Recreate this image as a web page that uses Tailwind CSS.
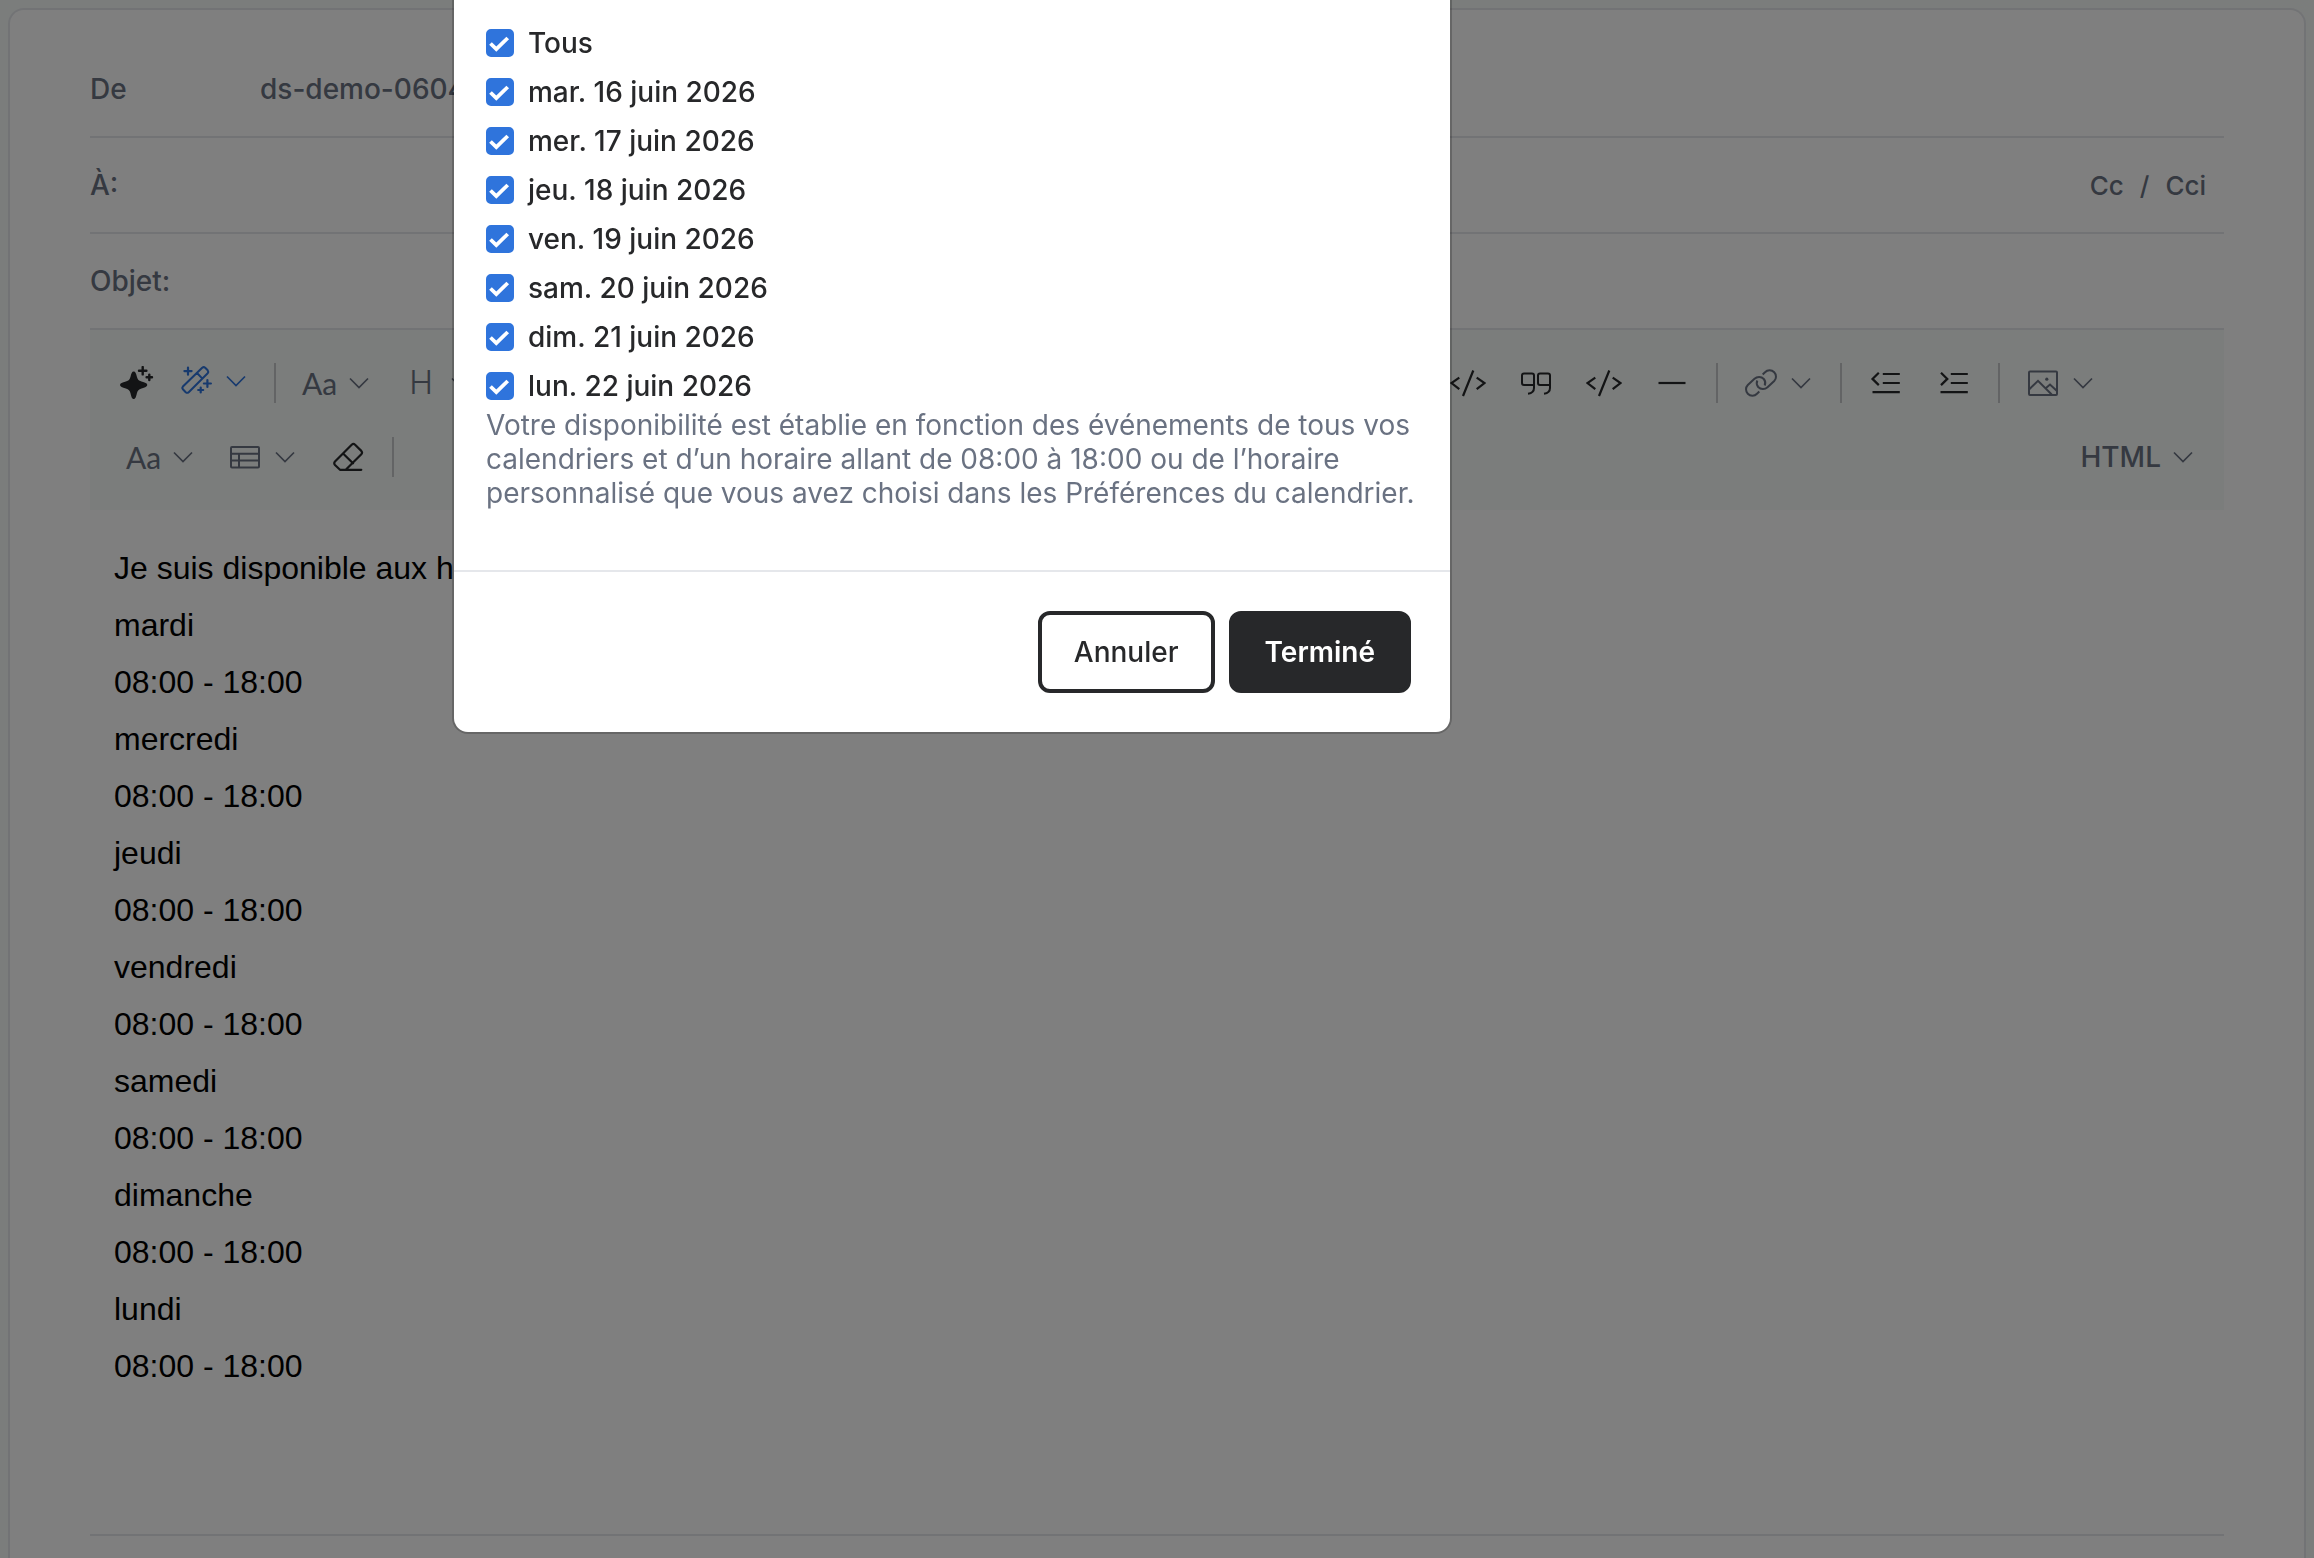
<!DOCTYPE html>
<html lang="fr">
<head>
    <meta charset="UTF-8">
    <meta name="viewport" content="width=device-width, initial-scale=1.0">
    <title>Nouveau message</title>
    <script src="https://cdn.jsdelivr.net/npm/@tailwindcss/browser@4"></script>
</head>
<body class="bg-[#f6faf8] font-['Inter',sans-serif] text-[28px] font-medium text-gray-500 overflow-hidden">

    <!-- Shared icons -->
    <svg class="hidden">
        <symbol id="chevron" viewBox="0 0 20 12"><path d="M1 1.500 10 10.500 19 1.500" fill="none" stroke="currentColor" stroke-width="1.700"/></symbol>
        <symbol id="code" viewBox="0 0 36 36"><path d="M23.300 5.500 13 31M9.300 12.700 1.500 18l7.800 6.200M26.700 12.700 34.500 18l-7.800 6.200" fill="none" stroke="currentColor" stroke-width="2.200"/></symbol>
        <symbol id="check" viewBox="0 0 28 28"><path d="m4.500 14.500 5.800 5.700L21.700 9" fill="none" stroke="currentColor" stroke-width="3.800"/></symbol>
    </svg>

    <main class="min-h-screen flex flex-col px-2 pt-2">
        <section class="flex-1 bg-white border-2 border-b-0 border-gray-200 rounded-t-[16px] px-20 pt-8">
            <!-- Message headers -->
            <div class="flex items-center h-24 border-b-2 border-gray-200">
                <span class="w-[170px]">De</span>
                <span>ds-demo-0604</span>
            </div>
            <div class="flex items-center h-24 border-b-2 border-gray-200">
                <label for="to" class="w-[170px]">À:</label>
                <input type="text" id="to" class="flex-1 outline-none">
                <div class="flex items-center gap-4 pr-[18px] text-[26px]">
                    <button type="button">Cc</button>
                    <span>/</span>
                    <button type="button">Cci</button>
                </div>
            </div>
            <div class="flex items-center h-24 border-b-2 border-gray-200">
                <label for="subject" class="w-[170px]">Objet:</label>
                <input type="text" id="subject" class="flex-1 outline-none">
            </div>

            <!-- Formatting toolbar -->
            <div class="bg-[#f6faf8] py-4 pl-5 pr-3">
                <div class="flex items-center justify-between h-[74px]">
                    <div class="flex items-center">
                        <button type="button" aria-label="Assistant" class="w-[60px] flex justify-center text-[#27282a] pr-[6px]">
                            <svg class="size-[34px]" viewBox="0 0 34 34"><path d="M13.700 5.500c1.800 0 2.400 2 3.200 5.300.7 2.800 1.800 4 4.600 4.800C25 16.600 27.300 17.300 27.300 19s-2.300 2.500-5.800 3.400c-2.800.8-3.900 2-4.600 4.800-.8 3.300-1.400 5.800-3.200 5.800s-2.400-2.500-3.200-5.800c-.7-2.800-1.800-4-4.600-4.800C2.300 21.500 0 20.700 0 19s2.300-2.400 5.900-3.400c2.800-.8 3.900-2 4.600-4.800.8-3.300 1.400-5.300 3.200-5.300Z" fill="currentColor"/><path d="M22.700 1v7.400M19 4.700h7.400M29.300 8.600v5.400M26.600 11.300H32" fill="none" stroke="currentColor" stroke-width="2.400" stroke-linecap="round"/></svg>
                        </button>
                        <button type="button" aria-label="Modèles" class="w-[94px] flex items-center gap-3 pl-[10px] pb-1 text-[#2f74dc]">
                            <svg class="size-[34px]" viewBox="0 0 34 34" fill="none" stroke="currentColor" stroke-width="2" stroke-linejoin="round" stroke-linecap="round"><path d="M22.200 3.700q1.500-1.200 3 0l2.500 2.600q1.200 1.500 0 3L8.700 28.200q-1.500 1.200-3 0l-2.800-2.900q-1.200-1.400 0-2.800ZM17 9l5.400 5.600"/><path d="M8 3.500v7.200M4.400 7.100h7.200M27.400 16v7M23.900 19.500h7M20.700 23.500v5M18.200 26h5" stroke-width="2.200"/></svg>
                            <svg class="w-5 h-3"><use href="#chevron"/></svg>
                        </button>
                        <span class="w-[2px] h-10 mx-[10px] bg-[#c6c8ca]"></span>
                        <button type="button" aria-label="Police" class="w-[102px] flex items-center gap-[14px] pl-4">
                            <span class="w-[33px] font-['Lato',sans-serif] font-normal text-[30px]">Aa</span>
                            <svg class="w-5 h-3"><use href="#chevron"/></svg>
                        </button>
                        <button type="button" aria-label="Titre" class="w-[102px] flex items-center gap-[14px] pl-[17px]">
                            <span class="w-8 font-light text-[32px] leading-[42px] text-center">H</span>
                            <svg class="w-5 h-3"><use href="#chevron"/></svg>
                        </button>
                    </div>

                    <div class="flex items-center mr-[100px]">
                        <button type="button" aria-label="Code" class="w-[68px] flex justify-center text-[#27282a]">
                            <svg class="size-9"><use href="#code"/></svg>
                        </button>
                        <button type="button" aria-label="Citation" class="w-[68px] flex justify-center text-[#27282a]">
                            <svg class="size-8" viewBox="0 0 32 32" fill="none" stroke="currentColor" stroke-width="2"><path d="M14 18H4q-2 0-2-2V8.500q0-2 2-2h8q2 0 2 2V21q0 5-6 5.700M30 18H20q-2 0-2-2V8.500q0-2 2-2h8q2 0 2 2V21q0 5-6 5.700"/></svg>
                        </button>
                        <button type="button" aria-label="Bloc de code" class="w-[68px] flex justify-center text-[#27282a]">
                            <svg class="size-9"><use href="#code"/></svg>
                        </button>
                        <button type="button" aria-label="Ligne horizontale" class="w-[68px] flex justify-center text-[#27282a]">
                            <svg class="size-8" viewBox="0 0 32 32"><path d="M2.500 16h27" stroke="currentColor" stroke-width="2.200"/></svg>
                        </button>
                        <span class="w-[2px] h-10 mx-[10px] bg-[#c6c8ca]"></span>
                        <button type="button" aria-label="Lien" class="w-[102px] flex items-center gap-[14px] pl-[17px]">
                            <svg class="size-8" viewBox="0 0 32 32" fill="none" stroke="currentColor" stroke-width="2"><path id="ring" d="M17.700 7.500 20 5.300a6.400 6.400 0 0 1 9.200 0a6.200 6.200 0 0 1 0 8.700L22.500 20.200a6.600 6.600 0 0 1-9.300-.2a6.300 6.300 0 0 1-.9-6.500"/><use href="#ring" transform="rotate(180 16 16)"/></svg>
                            <svg class="w-5 h-3"><use href="#chevron"/></svg>
                        </button>
                        <span class="w-[2px] h-10 mx-[10px] bg-[#c6c8ca]"></span>
                        <button type="button" aria-label="Diminuer le retrait" class="w-[68px] flex justify-center text-[#27282a]">
                            <svg class="size-8" viewBox="0 0 32 32" fill="none" stroke="currentColor" stroke-width="2.200"><path d="m8.800 5.700-6.300 6.200 6.300 6.200M12.800 7h17M12.800 16h17M2.500 25.200h27.300"/></svg>
                        </button>
                        <button type="button" aria-label="Augmenter le retrait" class="w-[68px] flex justify-center text-[#27282a]">
                            <svg class="size-8" viewBox="0 0 32 32" fill="none" stroke="currentColor" stroke-width="2.200"><path d="m3 5.700 6.300 6.200L3 18.100M12.800 7h17M12.800 16h17M2.500 25.200h27.300"/></svg>
                        </button>
                        <span class="w-[2px] h-10 mx-[10px] bg-[#c6c8ca]"></span>
                        <button type="button" aria-label="Image" class="w-[102px] flex items-center gap-[14px] pl-[17px]">
                            <svg class="size-8" viewBox="0 0 32 32" fill="none" stroke="currentColor" stroke-width="2"><rect x="2" y="4.500" width="28" height="23.500" rx="1"/><path d="m2.300 22.300 8.700-8.500 13.700 13.700M18.700 21.300l4.300-3.700 7 6.500"/><circle cx="19.800" cy="12.200" r="1.600" fill="currentColor" stroke="none"/></svg>
                            <svg class="w-5 h-3"><use href="#chevron"/></svg>
                        </button>
                    </div>
                </div>

                <div class="flex items-center justify-between h-[74px]">
                    <div class="flex items-center">
                        <button type="button" aria-label="Taille" class="w-[102px] flex items-center gap-[14px] pl-4">
                            <span class="w-[33px] font-['Lato',sans-serif] font-normal text-[30px]">Aa</span>
                            <svg class="w-5 h-3"><use href="#chevron"/></svg>
                        </button>
                        <button type="button" aria-label="Tableau" class="w-[102px] flex items-center gap-[14px] pl-[17px]">
                            <svg class="size-8" viewBox="0 0 32 32" fill="none" stroke="currentColor" stroke-width="2"><rect x="2" y="6" width="28" height="20.500" rx="1"/><path d="M2 12.700h28M2 19.500h28M10 12.700v13.800"/></svg>
                            <svg class="w-5 h-3"><use href="#chevron"/></svg>
                        </button>
                        <button type="button" aria-label="Effacer la mise en forme" class="w-[68px] flex justify-center text-[#27282a]">
                            <svg class="size-8" viewBox="0 0 32 32" fill="none" stroke="currentColor" stroke-width="2.200" stroke-linejoin="round" stroke-linecap="round"><path d="M29.300 28.800H8L3 24q-1.500-1.700 0-3.400L19.700 3.700q1.700-1.500 3.400 0l6.200 6.200q1.500 1.700 0 3.400L14 28.500M11.300 12.700l9.700 9.600"/></svg>
                        </button>
                        <span class="w-[2px] h-10 mx-[10px] bg-[#c6c8ca]"></span>
                    </div>
                    <button type="button" class="flex items-center gap-3 pr-[19px]">
                        HTML
                        <svg class="w-5 h-3"><use href="#chevron"/></svg>
                    </button>
                </div>
            </div>

            <!-- Message body -->
            <div contenteditable="true" role="textbox" aria-label="Message" class="px-6 pt-[30px] pb-[139px] border-b-2 border-gray-200 outline-none font-['Liberation_Sans',Arial,sans-serif] font-normal text-[32px] leading-[57px] text-black">
                <p>Je suis disponible aux horaires suivants :</p>
                <p>mardi</p>
                <p>08:00 - 18:00</p>
                <p>mercredi</p>
                <p>08:00 - 18:00</p>
                <p>jeudi</p>
                <p>08:00 - 18:00</p>
                <p>vendredi</p>
                <p>08:00 - 18:00</p>
                <p>samedi</p>
                <p>08:00 - 18:00</p>
                <p>dimanche</p>
                <p>08:00 - 18:00</p>
                <p>lundi</p>
                <p>08:00 - 18:00</p>
            </div>
        </section>
    </main>

    <!-- Availability dialog -->
    <div class="fixed inset-0 bg-black/50 flex items-start pl-[454px]">
        <form role="dialog" aria-label="Disponibilité" class="w-[996px] bg-white text-[#27282a] rounded-b-[14px] shadow-[0_0_0_2px_rgba(0,0,0,0.2)]">
            <div class="px-8 pt-[21px] pb-[60px]">
                <div id="days" class="flex flex-col gap-[5px]"></div>
                <p class="font-normal leading-[34px] text-gray-500">Votre disponibilité est établie en fonction des événements de tous vos calendriers et d’un horaire allant de 08:00 à 18:00 ou de l’horaire personnalisé que vous avez choisi dans les Préférences du calendrier.</p>
            </div>
            <div class="flex justify-end gap-[14px] border-t-2 border-gray-200 p-[39px]">
                <button type="button" class="h-[82px] px-8 rounded-xl border-4 border-[#27282a]">Annuler</button>
                <button type="button" class="h-[82px] px-8 rounded-xl border-4 border-[#27282a] bg-[#27282a] text-white font-semibold">Terminé</button>
            </div>
        </form>
    </div>

    <script>
        const days = ['Tous', 'mar. 16 juin 2026', 'mer. 17 juin 2026', 'jeu. 18 juin 2026', 'ven. 19 juin 2026', 'sam. 20 juin 2026', 'dim. 21 juin 2026', 'lun. 22 juin 2026'];

        // One tick box per day
        document.getElementById('days').innerHTML = days.map((day, i) => `
            <div class="flex items-center h-11 gap-[14px]">
                <span class="grid">
                    <input type="checkbox" id="day${i}" checked class="peer col-start-1 row-start-1 size-7 appearance-none rounded-[5px] border-2 border-gray-400 checked:border-[#2f74dc] checked:bg-[#2f74dc]">
                    <svg class="hidden peer-checked:block col-start-1 row-start-1 size-7 text-white pointer-events-none"><use href="#check"/></svg>
                </span>
                <label for="day${i}">${day}</label>
            </div>
        `).join('');
    </script>
</body>
</html>
